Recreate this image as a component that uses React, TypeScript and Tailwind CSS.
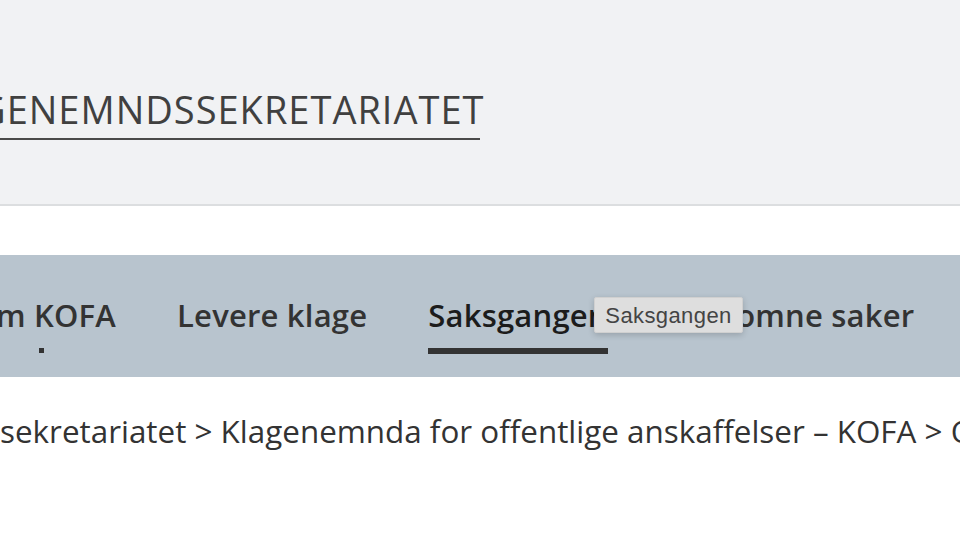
import React from 'react';

const navItems = [
  { pre: 'O', label: 'm KOFA', dot: true },
  { label: 'Levere klage' },
  { label: 'Saksgangen', active: true },
  { label: 'Innkomne saker' },
];

const App = () => {
  return (
    <div className="w-[960px] h-[540px] overflow-hidden bg-white font-['Open_Sans',sans-serif] text-[#333]">
      {/* site header */}
      <div className="h-[206px] bg-[#f1f2f4] border-b-2 border-[#dcdee0] pt-[90px]">
        <div className="flex">
          <div className="w-0 flex justify-end">
            <span className="whitespace-nowrap text-[38px] leading-none tracking-[1px]">KLA</span>
          </div>
          <div className="w-[502px] shrink-0 border-b-2 border-[#4a4a4a] pb-[8px] -ml-[22px]">
            <span className="whitespace-nowrap text-[38px] leading-none tracking-[1px] text-[#404040]">
              GENEMNDSSEKRETARIATET
            </span>
          </div>
        </div>
      </div>

      <div className="h-[49px]" />

      {/* main nav */}
      <nav className="relative h-[122px] bg-[#b8c4ce]">
        <ul className="flex gap-[61px] pt-[38px] -ml-[4px]">
          {navItems.map((item) => (
            <li key={item.label} className="flex">
              {item.pre && (
                <div className="w-0 flex justify-end">
                  <span className="whitespace-nowrap text-[31px] tracking-[0.2px] font-semibold leading-[44px]">{item.pre}</span>
                </div>
              )}
              <div className="flex flex-col">
                <span
                  className={`whitespace-nowrap text-[31px] tracking-[0.2px] font-semibold leading-[44px] ${
                    item.active ? 'text-[#1c1c1c]' : 'text-[#333]'
                  }`}
                >
                  {item.label}
                </span>
                {item.active && <div className="mt-[11px] h-[6px] bg-[#333]" />}
                {item.dot && <div className="mt-[11px] ml-[43px] w-[5px] h-[5px] bg-[#333]" />}
              </div>
            </li>
          ))}
        </ul>

        {/* hover tooltip */}
        <div className="absolute left-[594px] top-[42px] w-[149px] h-[36px] flex items-center justify-center bg-[#dedede] border border-[#d0d0d0] rounded-[2px] shadow-[0_2px_6px_rgba(0,0,0,0.18)]">
          <span className="font-['Liberation_Sans',sans-serif] text-[22px] tracking-[0.4px] text-[#444]">Saksgangen</span>
        </div>
      </nav>

      {/* breadcrumb */}
      <div className="flex pt-[33px] text-[31.4px] leading-[42px] text-[#333]">
        <div className="w-0 flex justify-end">
          <span className="whitespace-nowrap">Klagenemnds</span>
        </div>
        <span className="whitespace-nowrap">
          sekretariatet &gt; Klagenemnda for offentlige anskaffelser – KOFA &gt; Om KOFA
        </span>
      </div>
    </div>
  );
};

export default App;
